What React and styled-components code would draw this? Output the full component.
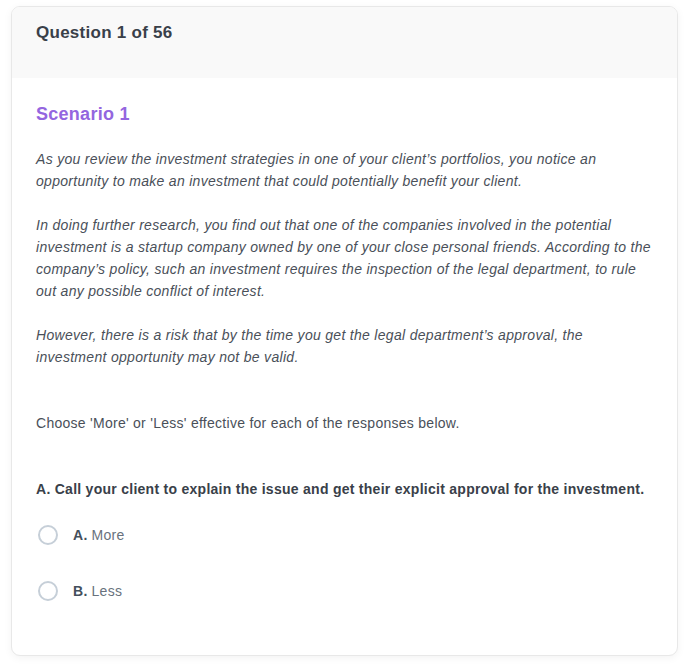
import React from 'react';
import styled, { createGlobalStyle } from 'styled-components';

const Global = createGlobalStyle`
  body {
    margin: 0;
    background: #ffffff;
    font-family: "Liberation Sans", Arial, sans-serif;
    letter-spacing: 0.27px;
  }
`;

const Card = styled.div`
  margin: 6px 13px 16px 11px;
  border: 1px solid #e8e8e8;
  border-radius: 9px;
  box-shadow: 0 2px 8px rgba(0, 0, 0, 0.05);
  overflow: hidden;
  background: #fff;
`;

const Header = styled.div`
  height: 71px;
  box-sizing: border-box;
  padding: 15px 24px;
  background: #f9f9f9;
  h2 {
    margin: 0;
    font-size: 17px;
    line-height: 22px;
    font-weight: bold;
    color: #394049;
  }
`;

const Body = styled.div`
  padding: 24px 24px 52px 24px;
`;

const Scenario = styled.h3`
  margin: 0 0 22px 0;
  font-size: 18px;
  line-height: 24px;
  font-weight: bold;
  color: #9466df;
`;

const Story = styled.p`
  margin: 0 0 ${(p) => (p.$last ? '44px' : '22px')} 0;
  font-size: 14px;
  line-height: 22px;
  font-style: italic;
  letter-spacing: 0.3px;
  color: #4a5059;
`;

const Instruction = styled.p`
  margin: 0 0 44px 0;
  font-size: 14px;
  line-height: 22px;
  color: #4a5059;
`;

const Question = styled.p`
  margin: 0 0 23px 0;
  font-size: 14px;
  line-height: 22px;
  font-weight: bold;
  color: #394049;
`;

const Options = styled.div`
  display: flex;
  flex-direction: column;
  gap: 32px;
`;

const Option = styled.label`
  display: flex;
  align-items: center;
  gap: 15px;
  height: 24px;
  padding-left: 2px;
  font-size: 14px;
  color: #68727d;
  cursor: pointer;
  b {
    color: #444f5c;
    margin-right: 4px;
  }
`;

const Radio = styled.span`
  width: 20px;
  height: 20px;
  box-sizing: border-box;
  border: 2px solid #c6cfd8;
  border-radius: 50%;
  background: #fff;
`;

const App = () => {
  return (
    <>
      <Global />
      <Card>
        <Header>
          <h2>Question 1 of 56</h2>
        </Header>
        <Body>
          <Scenario>Scenario 1</Scenario>
          <Story>
            As you review the investment strategies in one of your client’s portfolios, you notice an
            opportunity to make an investment that could potentially benefit your client.
          </Story>
          <Story>
            In doing further research, you find out that one of the companies involved in the potential
            investment is a startup company owned by one of your close personal friends. According to the
            company’s policy, such an investment requires the inspection of the legal department, to rule
            out any possible conflict of interest.
          </Story>
          <Story $last>
            However, there is a risk that by the time you get the legal department’s approval, the
            investment opportunity may not be valid.
          </Story>
          <Instruction>Choose 'More' or 'Less' effective for each of the responses below.</Instruction>
          <Question>A. Call your client to explain the issue and get their explicit approval for the investment.</Question>
          <Options>
            <Option>
              <Radio />
              <span><b>A.</b>More</span>
            </Option>
            <Option>
              <Radio />
              <span><b>B.</b>Less</span>
            </Option>
          </Options>
        </Body>
      </Card>
    </>
  );
};

export default App;
